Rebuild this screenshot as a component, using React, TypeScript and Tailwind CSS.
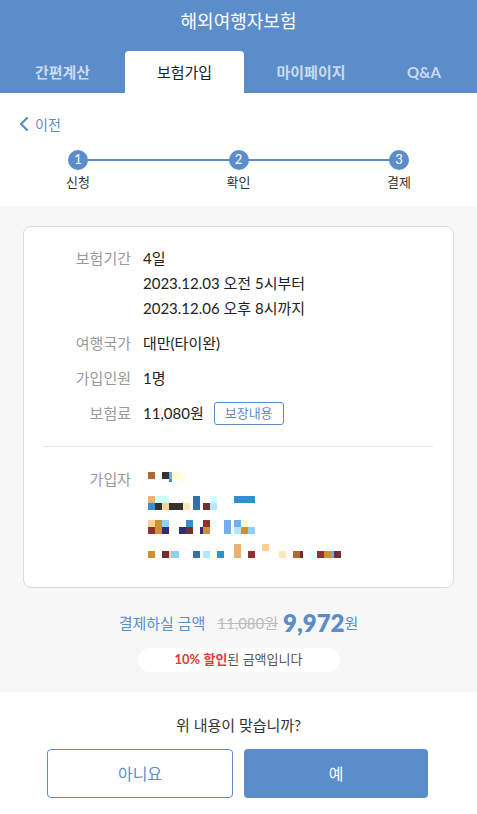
import { ChevronLeft } from 'lucide-react';

const FONT = "font-['Lato','Noto_Sans_CJK_KR',sans-serif]";

const tabs = [
  { t: '간편계산', w: 'w-[125px]' },
  { t: '보험가입', w: 'w-[119px]' },
  { t: '마이페이지', w: 'w-[134px]' },
  { t: 'Q&A', w: 'w-[92px]' },
];
const steps = [
  { n: 1, t: '신청' },
  { n: 2, t: '확인' },
  { n: 3, t: '결제' },
];

// redacted name/address mosaic: [x, y, w, h, color] in page coordinates
const blocks: [number, number, number, number, string][] = [
  [148, 473, 7, 7, '#b06a30'],
  [162, 473, 7, 7, '#333333'],
  [169, 473, 3, 7, '#6aaee8'],
  [169, 480, 3, 3, '#3090d0'],
  [172, 473, 7, 7, '#fffcd0'],
  [179, 473, 7, 10, '#fffce8'],

  [148, 497, 7, 7, '#ecb070'],
  [155, 497, 14, 7, '#d0ffff'],
  [193, 497, 7, 14, '#3470b0'],
  [210, 497, 7, 7, '#d0ffff'],
  [234, 497, 21, 7, '#3090d0'],
  [148, 504, 7, 7, '#3090d0'],
  [155, 504, 7, 7, '#333333'],
  [162, 504, 7, 7, '#ffd090'],
  [169, 504, 14, 7, '#333333'],
  [183, 504, 7, 7, '#ffe8b8'],
  [203, 504, 7, 7, '#703030'],
  [210, 504, 7, 7, '#b0e8ff'],

  [148, 521, 7, 7, '#ffd090'],
  [155, 521, 7, 14, '#d09030'],
  [162, 521, 7, 7, '#90d0ff'],
  [186, 521, 7, 7, '#3090d0'],
  [203, 521, 7, 7, '#903030'],
  [210, 521, 7, 7, '#e8ffff'],
  [224, 521, 7, 14, '#70b0f0'],
  [234, 521, 7, 7, '#70b0f0'],
  [241, 521, 7, 7, '#fffcd0'],
  [148, 528, 7, 7, '#903030'],
  [162, 528, 7, 7, '#303070'],
  [169, 528, 2, 7, '#fffcd0'],
  [179, 528, 7, 7, '#303070'],
  [186, 528, 7, 7, '#703030'],
  [200, 528, 3, 7, '#303070'],
  [203, 528, 7, 7, '#d09030'],
  [234, 528, 7, 7, '#b0e8ff'],
  [241, 528, 7, 7, '#d09030'],
  [248, 528, 7, 7, '#90d0ff'],

  [234, 545, 7, 14, '#ecb070'],
  [262, 545, 7, 7, '#ffd090'],
  [148, 552, 7, 7, '#d09030'],
  [162, 552, 7, 7, '#703030'],
  [169, 552, 2, 7, '#ffd090'],
  [171, 552, 8, 7, '#90d0ff'],
  [193, 552, 7, 7, '#3470b0'],
  [203, 552, 7, 7, '#b0e8ff'],
  [210, 552, 7, 7, '#fffce8'],
  [217, 552, 7, 7, '#3090d0'],
  [248, 552, 7, 7, '#903030'],
  [279, 552, 7, 7, '#ffe8b8'],
  [293, 552, 7, 7, '#b06a30'],
  [300, 552, 3, 7, '#703030'],
  [310, 552, 7, 7, '#e8ffff'],
  [317, 552, 7, 7, '#903030'],
  [324, 552, 7, 7, '#d09030'],
  [331, 552, 3, 7, '#6aaee8'],
  [334, 552, 7, 7, '#703030'],
];

function InfoRow({ label, children }: { label: string; children: React.ReactNode }) {
  return (
    <div className="flex">
      <div className="w-[107px] shrink-0 text-right text-[15px] leading-[25px] text-[#999]">{label}</div>
      <div className="ml-[12px] text-[15px] leading-[25px] text-[#222]">{children}</div>
    </div>
  );
}

export default function App() {
  return (
    <div className={`${FONT} w-[477px] min-h-screen bg-white`}>
      {/* header */}
      <header className="bg-[#5b8dcb]">
        <div className="h-[51px] flex items-center justify-center pb-[12px] pt-[4px] text-white text-[18px]">
          해외여행자보험
        </div>
        <div className="flex h-[42px]">
          {tabs.map(({ t, w }) => (
            <div
              key={t}
              className={`${w} shrink-0 flex items-center justify-center text-[15px] rounded-t-[4px] ${
                t === '보험가입' ? 'bg-white text-[#222]' : 'font-bold text-[#cbdaf0]'
              }`}
            >
              {t}
            </div>
          ))}
        </div>
      </header>

      {/* back + steps */}
      <section className="pt-[21px] pb-[15px]">
        <div className="flex items-center h-[20px] pl-[12px] text-[#5b8dcb] text-[14px]">
          <ChevronLeft size={24} strokeWidth={2.25} />
          <span className="-ml-[1px]">이전</span>
        </div>
        <div className="relative mx-[58px] mt-[16px] flex justify-between">
          <div className="absolute left-[20px] right-[20px] top-[9px] h-[2px] bg-[#5b8dcb]" />
          {steps.map((s) => (
            <div key={s.n} className="relative w-10 flex flex-col items-center">
              <div className="w-[20px] h-[20px] rounded-full bg-[#5b8dcb] text-white text-[13px] flex items-center justify-center">
                {s.n}
              </div>
              <div className="mt-[3px] text-[13px] leading-[18px] text-[#333]">{s.t}</div>
            </div>
          ))}
        </div>
      </section>

      {/* summary */}
      <section className="bg-[#f7f7f7] pt-5 pb-5">
        <div className="mx-[23px] w-[431px] bg-white border border-[#dcdcdc] rounded-[8px] pt-[19px] pb-[24px]">
          <div className="flex flex-col gap-[10px]">
            <InfoRow label="보험기간">
              <div>4일</div>
              <div>2023.12.03 오전 5시부터</div>
              <div>2023.12.06 오후 8시까지</div>
            </InfoRow>
            <InfoRow label="여행국가">대만(타이완)</InfoRow>
            <InfoRow label="가입인원">1명</InfoRow>
            <InfoRow label="보험료">
              <div className="flex items-center">
                11,080원
                <span className="ml-[10px] h-[23px] px-[10px] flex items-center border border-[#5b8dcb] rounded-[3px] text-[#5b8dcb] text-[13px]">
                  보장내용
                </span>
              </div>
            </InfoRow>
          </div>
          <div className="mx-5 mt-[20px] border-t border-[#e5e5e5]" />
          <div className="flex mt-[20px]">
            <div className="w-[107px] shrink-0 text-right text-[15px] leading-[25px] text-[#999]">가입자</div>
            <div className="ml-[12px] relative h-[96px] flex-1">
              {blocks.map(([x, y, w, h, c], i) => (
                <div
                  key={i}
                  className="absolute"
                  style={{ left: x - 143, top: y - 468, width: w, height: h, background: c }}
                />
              ))}
            </div>
          </div>
        </div>

        <div className="mt-[19px] h-[32px] flex items-center justify-center">
          <span className="text-[#5b8dcb] text-[15px]">결제하실 금액</span>
          <span className="ml-[12px] text-[#bbb] text-[15px] line-through">11,080원</span>
          <span className="ml-[5px] text-[#5b8dcb] text-[24px] font-extrabold">9,972</span>
          <span className="text-[#5b8dcb] text-[15px]">원</span>
        </div>
        <div className="mt-[9px] mx-auto w-[202px] h-[24px] rounded-full bg-white flex items-center justify-center text-[13px] text-[#555]">
          <span className="text-[#e53935] font-bold">10% 할인</span>
          <span>된 금액입니다</span>
        </div>
      </section>

      {/* confirm */}
      <section className="pt-[22px] pb-4">
        <div className="text-center text-[15px] leading-[22px] text-[#333]">위 내용이 맞습니까?</div>
        <div className="mt-[13px] pl-[47px] pr-[49px] flex gap-[11px]">
          <button className="flex-1 h-[49px] border border-[#5b8dcb] rounded-[4px] text-[#5b8dcb] text-[16px] bg-white">
            아니요
          </button>
          <button className="flex-1 h-[49px] rounded-[4px] bg-[#5b8dcb] text-white text-[16px]">예</button>
        </div>
      </section>
    </div>
  );
}
